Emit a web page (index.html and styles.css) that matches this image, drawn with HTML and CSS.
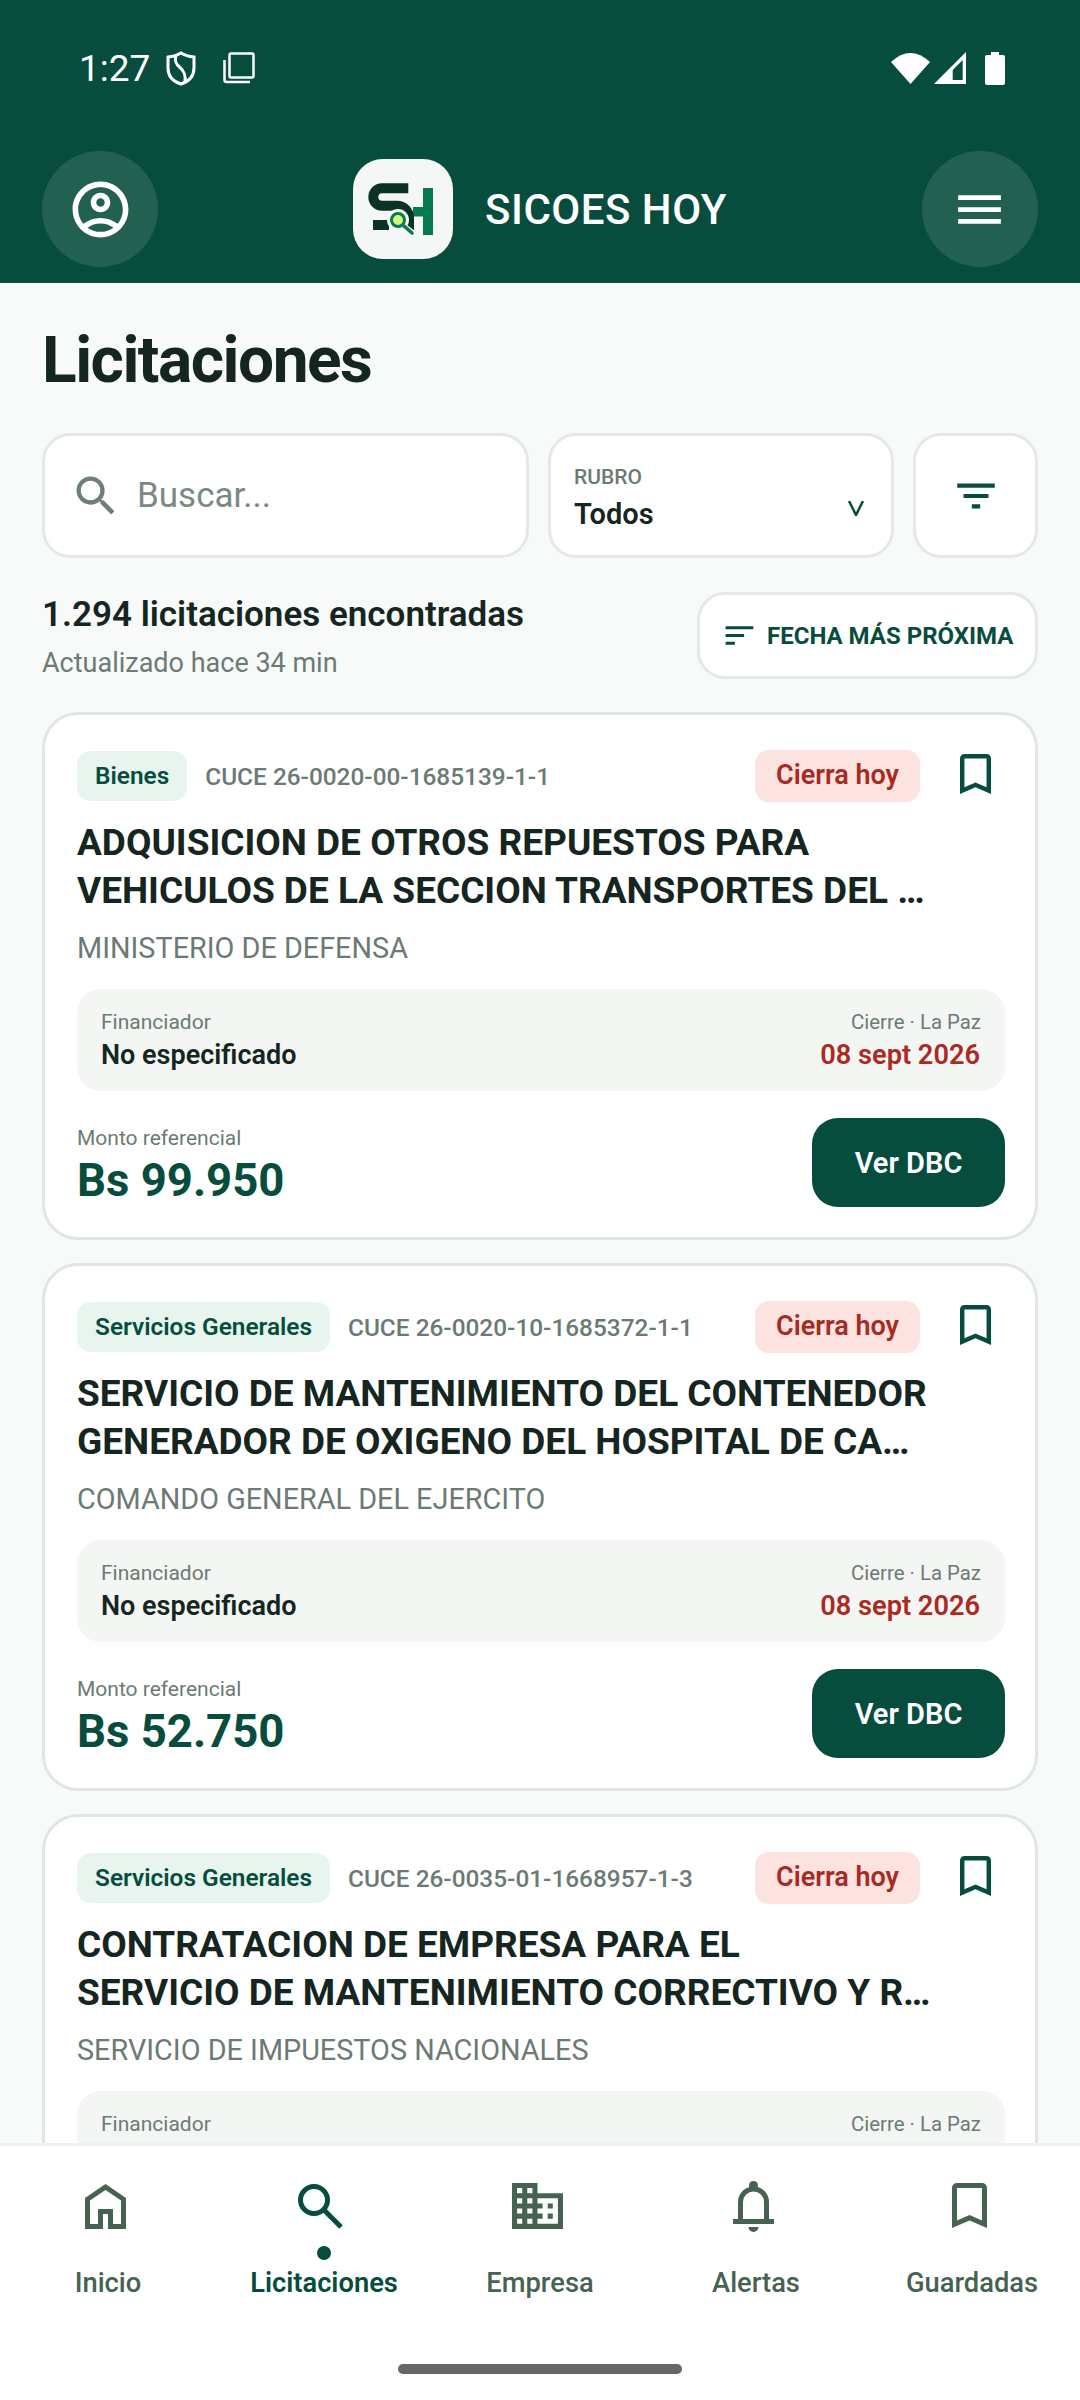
FILE: index.html
```html
<!DOCTYPE html>
<html lang="es">
<head>
    <meta charset="UTF-8">
    <meta name="viewport" content="width=device-width, initial-scale=1.0">
    <title>SICOES HOY</title>
    <link rel="stylesheet" href="styles.css">
</head>
<body>
<div class="app">

    <header class="top">
        <div class="status">
            <div class="status-left">
                <span class="time">1:27</span>
                <svg class="st-shield" viewBox="0 0 30 35"><path d="M15 2c4 2.500 8 3.500 13 4v11c0 8-5 13.500-13 16C7 30.500 2 25 2 17V6c5-.5 9-1.500 13-4z" fill="none" stroke="#fff" stroke-width="3"/><path d="M10 5c-2 5 0 8 4 11.500s6 7 5 15" fill="none" stroke="#fff" stroke-width="3"/></svg>
                <svg class="st-copy" viewBox="0 0 32 32"><rect x="6.500" y="1.500" width="24" height="24" rx="1.500" fill="none" stroke="#fff" stroke-width="2.500"/><path d="M1.500 8v20a2 2 0 0 0 2 2H27" fill="none" stroke="#fff" stroke-width="2.500"/></svg>
            </div>
            <div class="status-right">
                <svg class="st-wifi" viewBox="0 0 39 31"><path d="M19.500 31L0 9Q19.500-9 39 9z" fill="#fff"/></svg>
                <svg class="st-signal" viewBox="0 0 32 32"><path d="M32 0v32H0zM28.700 8L18.700 18v10h10z" fill="#fff" fill-rule="evenodd"/></svg>
                <svg class="st-batt" viewBox="0 0 20 33"><path d="M6 0h8v3h4a2 2 0 0 1 2 2v26a2 2 0 0 1-2 2H2a2 2 0 0 1-2-2V5a2 2 0 0 1 2-2h4z" fill="#fff"/></svg>
            </div>
        </div>
        <div class="appbar">
            <button class="round-btn">
                <svg viewBox="0 0 24 24" class="ic-profile"><path fill="#fff" d="M12 2C6.480 2 2 6.480 2 12s4.480 10 10 10 10-4.480 10-10S17.520 2 12 2zM7.350 18.500C8.660 17.560 10.260 17 12 17s3.340.56 4.650 1.500C15.340 19.440 13.740 20 12 20s-3.340-.56-4.650-1.500zm10.790-1.380C16.450 15.800 14.320 15 12 15s-4.450.8-6.140 2.120C4.700 15.730 4 13.950 4 12c0-4.420 3.580-8 8-8s8 3.580 8 8c0 1.950-.7 3.730-1.860 5.120zM12 6c-1.930 0-3.500 1.570-3.500 3.500S10.070 13 12 13s3.500-1.570 3.500-3.500S13.930 6 12 6zm0 5c-.83 0-1.500-.67-1.500-1.500S11.170 8 12 8s1.500.67 1.500 1.500S12.830 11 12 11z"/></svg>
            </button>
            <div class="brand">
                <div class="logo">
                    <svg viewBox="0 0 100 100">
                        <rect x="70" y="29" width="10" height="47" fill="#087a50"/>
                        <rect x="60" y="48" width="10" height="9.500" fill="#087a50"/>
                        <path d="M55.300 29.300H29a8.700 8.700 0 0 0 0 17.400h15a12 12 0 0 1 12 12V71" fill="none" stroke="#0a3323" stroke-width="10"/>
                        <rect x="20" y="61" width="16" height="10" fill="#0a3323"/>
                        <circle cx="45" cy="61" r="11" fill="#f5f7f6"/>
                        <path d="M51 68l9 7" stroke="#f5f7f6" stroke-width="7"/>
                        <path d="M51 67l8 7" stroke="#087a50" stroke-width="3.500" stroke-linecap="round"/>
                        <circle cx="45" cy="61" r="6.500" fill="#d6f57a" stroke="#087a50" stroke-width="3"/>
                    </svg>
                </div>
                <span class="brand-name">SICOES HOY</span>
            </div>
            <button class="round-btn">
                <svg viewBox="0 0 24 24" class="ic-menu"><path fill="#fff" d="M3 18h18v-2H3v2zm0-5h18v-2H3v2zm0-7v2h18V6H3z"/></svg>
            </button>
        </div>
    </header>

    <main class="content">
        <h1 class="page-title">Licitaciones</h1>

        <div class="filters">
            <div class="box search-box">
                <svg viewBox="0 0 24 24" class="ic-search"><path fill="#6f7f78" d="M15.500 14h-.79l-.28-.27C15.410 12.590 16 11.110 16 9.500 16 5.910 13.090 3 9.500 3S3 5.910 3 9.500 5.910 16 9.500 16c1.610 0 3.090-.59 4.230-1.570l.27.28v.79l5 4.990L20.490 19l-4.990-5zm-6 0C7.010 14 5 11.990 5 9.500S7.010 5 9.500 5 14 7.010 14 9.500 11.990 14 9.500 14z"/></svg>
                <span class="placeholder">Buscar...</span>
            </div>
            <div class="box rubro-box">
                <div class="rubro-text">
                    <span class="rubro-label">RUBRO</span>
                    <span class="rubro-value">Todos</span>
                </div>
                <svg class="rubro-arrow" viewBox="0 0 16 16"><path d="M1 1l7 14 7-14" fill="none" stroke="#074d3d" stroke-width="2.500"/></svg>
            </div>
            <div class="box filter-box">
                <svg viewBox="0 0 24 24"><path fill="#074d3d" d="M10 18h4v-2h-4v2zM3 6v2h18V6H3zm3 7h12v-2H6v2z"/></svg>
            </div>
        </div>

        <div class="results">
            <div>
                <div class="results-count">1.294 licitaciones encontradas</div>
                <div class="results-updated">Actualizado hace 34 min</div>
            </div>
            <div class="box sort-btn">
                <svg viewBox="0 0 24 24"><path fill="#074d3d" d="M3 18h6v-2H3v2zM3 6v2h18V6H3zm0 7h12v-2H3v2z"/></svg>
                <span>FECHA MÁS PRÓXIMA</span>
            </div>
        </div>

        <article class="card">
            <div class="card-top">
                <span class="chip">Bienes</span>
                <span class="cuce">CUCE 26-0020-00-1685139-1-1</span>
                <span class="closing">Cierra hoy</span>
                <svg class="ic-save" viewBox="5 3 14 18"><path fill="#074d3d" d="M17 3H7c-1.100 0-2 .9-2 2v16l7-3 7 3V5c0-1.100-.9-2-2-2zm0 15l-5-2.180L7 18V5h10v13z"/></svg>
            </div>
            <h2 class="card-title">ADQUISICION DE OTROS REPUESTOS PARA<br>VEHICULOS DE LA SECCION TRANSPORTES DEL …</h2>
            <div class="entity">MINISTERIO DE DEFENSA</div>
            <div class="info">
                <div>
                    <div class="info-label">Financiador</div>
                    <div class="info-value">No especificado</div>
                </div>
                <div class="info-right">
                    <div class="info-label">Cierre · La Paz</div>
                    <div class="info-date">08 sept 2026</div>
                </div>
            </div>
            <div class="card-bottom">
                <div class="amount-box">
                    <div class="amount-label">Monto referencial</div>
                    <div class="amount">Bs 99.950</div>
                </div>
                <button class="dbc-btn">Ver DBC</button>
            </div>
        </article>

        <article class="card">
            <div class="card-top">
                <span class="chip">Servicios Generales</span>
                <span class="cuce">CUCE 26-0020-10-1685372-1-1</span>
                <span class="closing">Cierra hoy</span>
                <svg class="ic-save" viewBox="5 3 14 18"><path fill="#074d3d" d="M17 3H7c-1.100 0-2 .9-2 2v16l7-3 7 3V5c0-1.100-.9-2-2-2zm0 15l-5-2.180L7 18V5h10v13z"/></svg>
            </div>
            <h2 class="card-title">SERVICIO DE MANTENIMIENTO DEL CONTENEDOR<br>GENERADOR DE OXIGENO DEL HOSPITAL DE CA…</h2>
            <div class="entity">COMANDO GENERAL DEL EJERCITO</div>
            <div class="info">
                <div>
                    <div class="info-label">Financiador</div>
                    <div class="info-value">No especificado</div>
                </div>
                <div class="info-right">
                    <div class="info-label">Cierre · La Paz</div>
                    <div class="info-date">08 sept 2026</div>
                </div>
            </div>
            <div class="card-bottom">
                <div class="amount-box">
                    <div class="amount-label">Monto referencial</div>
                    <div class="amount">Bs 52.750</div>
                </div>
                <button class="dbc-btn">Ver DBC</button>
            </div>
        </article>

        <article class="card">
            <div class="card-top">
                <span class="chip">Servicios Generales</span>
                <span class="cuce">CUCE 26-0035-01-1668957-1-3</span>
                <span class="closing">Cierra hoy</span>
                <svg class="ic-save" viewBox="5 3 14 18"><path fill="#074d3d" d="M17 3H7c-1.100 0-2 .9-2 2v16l7-3 7 3V5c0-1.100-.9-2-2-2zm0 15l-5-2.180L7 18V5h10v13z"/></svg>
            </div>
            <h2 class="card-title">CONTRATACION DE EMPRESA PARA EL<br>SERVICIO DE MANTENIMIENTO CORRECTIVO Y R…</h2>
            <div class="entity">SERVICIO DE IMPUESTOS NACIONALES</div>
            <div class="info">
                <div>
                    <div class="info-label">Financiador</div>
                </div>
                <div class="info-right">
                    <div class="info-label">Cierre · La Paz</div>
                </div>
            </div>
        </article>
    </main>

    <nav class="bottom-nav">
        <div class="nav-item">
            <svg viewBox="0 0 56 56"><path fill="none" stroke="#456350" stroke-width="5" d="M27.500 9l18 12.300v27.200h-13v-15h-10v15h-13V21.300z"/></svg>
            <span class="nav-label">Inicio</span>
        </div>
        <div class="nav-item active">
            <svg viewBox="0 0 56 56"><circle cx="20" cy="22" r="13.500" fill="none" stroke="#074d3d" stroke-width="5"/><path d="M30 32l17 17" stroke="#074d3d" stroke-width="5"/></svg>
            <span class="nav-dot"></span>
            <span class="nav-label">Licitaciones</span>
        </div>
        <div class="nav-item">
            <svg viewBox="0 0 56 56"><path transform="translate(-3.100 -2.650) scale(2.550)" fill="#456350" d="M12 7V3H2v18h20V7H12zM6 19H4v-2h2v2zm0-4H4v-2h2v2zm0-4H4V9h2v2zm0-4H4V5h2v2zm4 12H8v-2h2v2zm0-4H8v-2h2v2zm0-4H8V9h2v2zm0-4H8V5h2v2zm10 12h-8v-2h2v-2h-2v-2h2v-2h-2V9h8v10zm-2-8h-2v2h2v-2zm0 4h-2v2h2v-2z"/></svg>
            <span class="nav-label">Empresa</span>
        </div>
        <div class="nav-item">
            <svg viewBox="0 0 56 56"><path d="M14.500 43V24a13 13 0 0 1 26 0v19" fill="none" stroke="#456350" stroke-width="5"/><rect x="7" y="41" width="41" height="5" fill="#456350"/><circle cx="27.500" cy="7.500" r="4.500" fill="#456350"/><path d="M22.500 49h10a5 5 0 0 1-10 0z" fill="#456350"/></svg>
            <span class="nav-label">Alertas</span>
        </div>
        <div class="nav-item">
            <svg viewBox="0 0 56 56"><path transform="translate(-2.500 -2.500) scale(2.500)" fill="#456350" d="M17 3H7c-1.100 0-2 .9-2 2v16l7-3 7 3V5c0-1.100-.9-2-2-2zm0 15l-5-2.180L7 18V5h10v13z"/></svg>
            <span class="nav-label">Guardadas</span>
        </div>
    </nav>

    <div class="home-area"><span class="home-bar"></span></div>
</div>
</body>
</html>
```

FILE: styles.css
```css
* {
    box-sizing: border-box;
}
body {
    margin: 0;
    font-family: Roboto, "Noto Sans", sans-serif;
    background-color: #f8faf9;
    color: #14261f;
}
button {
    font-family: inherit;
    border: none;
    padding: 0;
}
svg {
    display: block;
}
.app {
    width: 1080px;
    height: 2400px;
    display: flex;
    flex-direction: column;
    overflow: hidden;
}

/* green header */
.top {
    height: 283px;
    flex-shrink: 0;
    background-color: #074d3d;
    color: white;
    padding: 0 42px;
}
.status {
    height: 151px;
    padding: 45px 33px 0 37px;
    display: flex;
    justify-content: space-between;
    align-items: flex-start;
}
.status-left, .status-right {
    height: 46px;
    display: flex;
    align-items: center;
}
.time {
    font-size: 37px;
    margin-right: 16px;
}
.st-shield {
    width: 30px;
    height: 35px;
}
.st-copy {
    width: 32px;
    height: 32px;
    margin-left: 27px;
}
.st-wifi {
    width: 39px;
    height: 31px;
}
.st-signal {
    width: 32px;
    height: 32px;
    margin-left: 4px;
}
.st-batt {
    width: 20px;
    height: 33px;
    margin-left: 19px;
}
.appbar {
    display: flex;
    justify-content: space-between;
    align-items: center;
}
.round-btn {
    width: 116px;
    height: 116px;
    border-radius: 50%;
    background-color: rgba(255, 255, 255, 0.11);
    display: flex;
    align-items: center;
    justify-content: center;
}
.ic-profile {
    width: 67px;
    height: 67px;
}
.ic-menu {
    width: 57px;
    height: 57px;
}
.brand {
    display: flex;
    align-items: center;
    gap: 32px;
}
.logo {
    width: 100px;
    height: 100px;
    border-radius: 30px;
    background-color: #f5f7f6;
}
.logo svg {
    width: 100px;
    height: 100px;
}
.brand-name {
    font-size: 42px;
    font-weight: 500;
    letter-spacing: 0.5px;
}

/* list */
.content {
    flex: 1;
    min-height: 0;
    overflow: hidden;
    padding: 0 42px;
}
.page-title {
    margin: 46px 0 40px 0;
    font-size: 64px;
    line-height: 64px;
    font-weight: 700;
    letter-spacing: -1.5px;
}
.box {
    background: #ffffff;
    border: 3px solid #e2e9e6;
    border-radius: 28px;
}
.filters {
    display: flex;
    gap: 19px;
    height: 125px;
}
.search-box {
    width: 487px;
    display: flex;
    align-items: center;
    padding-left: 25px;
    gap: 15px;
}
.ic-search {
    width: 52px;
    height: 52px;
}
.placeholder {
    font-size: 35px;
    color: #7a8a83;
}
.rubro-box {
    width: 346px;
    display: flex;
    align-items: flex-end;
    justify-content: space-between;
    padding: 0 27px 24px 23px;
}
.rubro-text {
    display: flex;
    flex-direction: column;
}
.rubro-label {
    font-size: 21px;
    font-weight: 500;
    color: #6b7b74;
    margin-bottom: 8px;
}
.rubro-value {
    font-size: 29px;
    font-weight: 600;
}
.rubro-arrow {
    width: 16px;
    height: 16px;
    margin-bottom: 15px;
}
.filter-box {
    flex: 1;
    display: flex;
    align-items: center;
    justify-content: center;
}
.filter-box svg {
    width: 50px;
    height: 50px;
}
.results {
    display: flex;
    justify-content: space-between;
    align-items: center;
    margin: 33px 0 32px 0;
}
.results-count {
    font-size: 35px;
    font-weight: 600;
    line-height: 44px;
    padding-top: 2px;
}
.results-updated {
    font-size: 27px;
    color: #6b7b74;
    margin-top: 9px;
    line-height: 34px;
}
.sort-btn {
    width: 341px;
    height: 87px;
    display: flex;
    align-items: center;
    padding-left: 21px;
    gap: 9px;
    font-size: 24px;
    font-weight: 700;
    color: #074d3d;
    white-space: nowrap;
}
.sort-btn svg {
    width: 37px;
    height: 37px;
}

/* cards */
.card {
    background: #ffffff;
    border: 3px solid #dfe7e3;
    border-radius: 36px;
    padding: 34px 30px 32px 32px;
    margin-bottom: 23px;
    height: 528px;
}
.card-top {
    display: flex;
    align-items: center;
    height: 54px;
}
.chip {
    background: #e7f5ee;
    color: #074d3d;
    font-size: 24.4px;
    font-weight: 600;
    padding: 0 18px;
    height: 50px;
    line-height: 50px;
    border-radius: 14px;
    margin-right: 18px;
}
.cuce {
    font-size: 24.4px;
    font-weight: 500;
    color: #6b7b74;
    flex: 1;
}
.closing {
    background: #fde3df;
    color: #a62b24;
    font-size: 27px;
    font-weight: 600;
    padding: 0 21px;
    height: 52px;
    line-height: 50px;
    border-radius: 14px;
}
.ic-save {
    width: 31px;
    height: 40px;
    margin: 0 14px 4px 40px;
}
.card-title {
    margin: 16px 0 0 0;
    font-size: 37px;
    line-height: 48px;
    font-weight: 700;
    white-space: nowrap;
}
.entity {
    font-size: 28.8px;
    color: #6b7b74;
    margin-top: 14px;
    line-height: 38px;
}
.info {
    margin-top: 22px;
    height: 102px;
    background: #f4f6f3;
    border-radius: 24px;
    padding: 19px 24px 0 24px;
    display: flex;
    justify-content: space-between;
}
.info-label {
    font-size: 21px;
    line-height: 28px;
    color: #6b7b74;
}
.info-value {
    font-size: 27px;
    font-weight: 600;
    line-height: 36px;
    margin-top: 1px;
}
.info-right {
    text-align: right;
}
.info-right .info-label {
    font-size: 20.4px;
}
.info-date {
    font-size: 27.2px;
    font-weight: 600;
    color: #ab2a22;
    line-height: 36px;
    margin-top: 1px;
    padding-right: 1px;
}
.card-bottom {
    margin-top: 27px;
    display: flex;
    justify-content: space-between;
    align-items: flex-start;
}
.amount-box {
    padding-top: 6px;
}
.amount-label {
    font-size: 21px;
    line-height: 28px;
    color: #6b7b74;
}
.amount {
    font-size: 45.5px;
    font-weight: 700;
    line-height: 52px;
    margin-top: 3px;
    color: #074d3d;
}
.dbc-btn {
    width: 193px;
    height: 89px;
    border-radius: 26px;
    background-color: #074d3d;
    color: white;
    font-size: 29px;
    font-weight: 600;
}

/* bottom navigation */
.bottom-nav {
    flex-shrink: 0;
    height: 194px;
    background: #ffffff;
    border-top: 3px solid #edf1ef;
    display: flex;
}
.nav-item {
    width: 216px;
    position: relative;
    display: flex;
    flex-direction: column;
    align-items: center;
    padding-top: 32px;
    color: #456350;
}
.nav-item svg {
    width: 56px;
    height: 56px;
    margin-right: 4px;
}
.nav-label {
    position: absolute;
    top: 121px;
    font-size: 27.3px;
    font-weight: 500;
    line-height: 32px;
}
.nav-item.active {
    color: #074d3d;
}
.nav-item.active .nav-label {
    font-weight: 600;
}
.nav-dot {
    position: absolute;
    top: 100px;
    width: 14px;
    height: 14px;
    border-radius: 50%;
    background-color: #074d3d;
}
.home-area {
    flex-shrink: 0;
    height: 63px;
    background: #ffffff;
    display: flex;
    justify-content: center;
    padding-top: 27px;
}
.home-bar {
    width: 284px;
    height: 10px;
    border-radius: 5px;
    background-color: #666666;
}
```
